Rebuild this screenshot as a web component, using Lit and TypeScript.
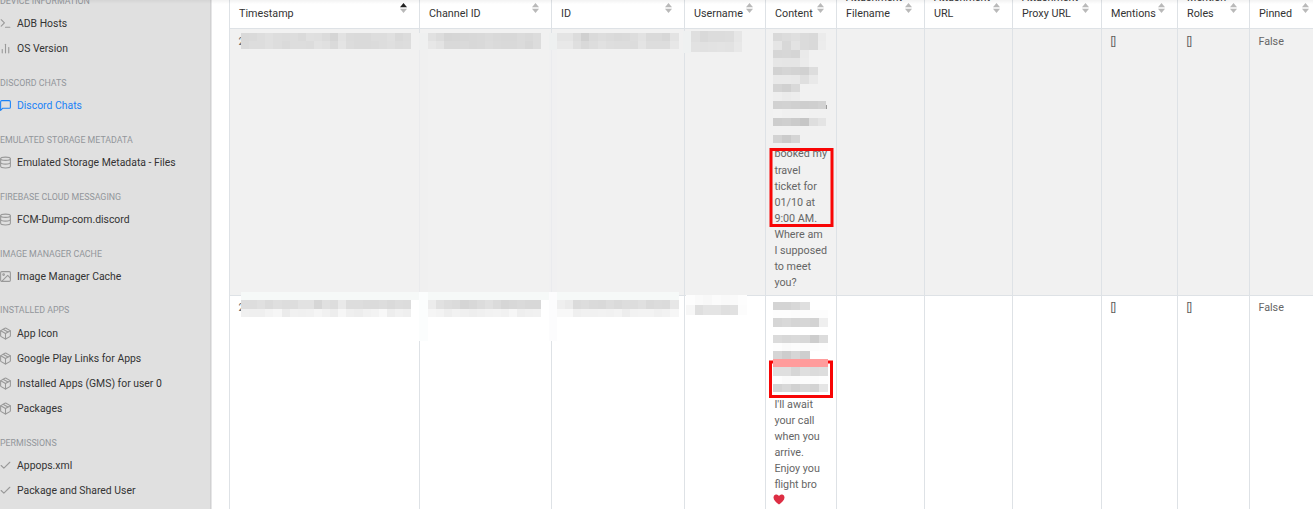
import { LitElement, html, css, svg } from "lit";
import { customElement, property } from "lit/decorators.js";

const ICONS: Record<string, unknown> = {
  terminal: svg`<polyline points="4 17 10 11 4 5"/><line x1="12" y1="19" x2="20" y2="19"/>`,
  bars: svg`<line x1="18" y1="20" x2="18" y2="10"/><line x1="12" y1="20" x2="12" y2="4"/><line x1="6" y1="20" x2="6" y2="14"/>`,
  message: svg`<path d="M21 15a2 2 0 0 1-2 2H7l-4 4V5a2 2 0 0 1 2-2h14a2 2 0 0 1 2 2z"/>`,
  database: svg`<ellipse cx="12" cy="5" rx="9" ry="3"/><path d="M21 12c0 1.66-4 3-9 3s-9-1.34-9-3"/><path d="M3 5v14c0 1.66 4 3 9 3s9-1.34 9-3V5"/>`,
  image: svg`<rect x="3" y="3" width="18" height="18" rx="2"/><circle cx="8.5" cy="8.5" r="1.5"/><polyline points="21 15 16 10 5 21"/>`,
  package: svg`<line x1="16.5" y1="9.4" x2="7.5" y2="4.21"/><path d="M21 16V8a2 2 0 0 0-1-1.73l-7-4a2 2 0 0 0-2 0l-7 4A2 2 0 0 0 3 8v8a2 2 0 0 0 1 1.73l7 4a2 2 0 0 0 2 0l7-4A2 2 0 0 0 21 16z"/><polyline points="3.27 6.96 12 12.01 20.73 6.96"/><line x1="12" y1="22.08" x2="12" y2="12"/>`,
  check: svg`<polyline points="20 6 9 17 4 12"/>`,
};

const GROUPS: { title: string; items: [string, string][] }[] = [
  { title: "Device Information", items: [["terminal", "ADB Hosts"], ["bars", "OS Version"]] },
  { title: "Discord Chats", items: [["message", "Discord Chats"]] },
  { title: "Emulated Storage Metadata", items: [["database", "Emulated Storage Metadata - Files"]] },
  { title: "Firebase Cloud Messaging", items: [["database", "FCM-Dump-com.discord"]] },
  { title: "Image Manager Cache", items: [["image", "Image Manager Cache"]] },
  {
    title: "Installed Apps",
    items: [
      ["package", "App Icon"],
      ["package", "Google Play Links for Apps"],
      ["package", "Installed Apps (GMS) for user 0"],
      ["package", "Packages"],
    ],
  },
  { title: "Permissions", items: [["check", "Appops.xml"], ["check", "Package and Shared User"]] },
];

const COLUMNS: string[][] = [
  ["Timestamp"], ["Channel ID"], ["ID"], ["Username"], ["Content"],
  ["Attachment", "Filename"], ["Attachment", "URL"], ["Attachment", "Proxy URL"],
  ["Mentions"], ["Mention", "Roles"], ["Pinned"],
];

interface Row { hidden: number; lines: string[]; heart: boolean }
const ROWS: Row[] = [
  { hidden: 7, heart: false, lines: ["booked my", "travel", "ticket for", "01/10 at", "9:00 AM.", "Where am", "I supposed", "to meet", "you?"] },
  { hidden: 6, heart: true, lines: ["I'll await", "your call", "when you", "arrive.", "Enjoy you", "flight bro"] },
];

/* Strips of pixelation: x, y, cell width, height, two hex digits of grey per cell. */
type Strip = [number, number, number, number, string];
const STRIPS: Strip[] = [
  [241, 33, 8.1, 8, "d9dadde0dddcdddae0dfdbd5e2dbdadadddde0d9dcdd"],
  [241, 41, 8.1, 8, "dadddde0dddadddddce2e0dae4dcdadadbdddfdcdd"],
  [428, 33, 8.1, 8, "e1dcd5d6d7d8d9dbd9d8d8dbd9dc"],
  [428, 41, 8.1, 8, "e7e3d9d9dad8d9dcdad9d9dbd7dc"],
  [557, 33, 8.1, 8, "e4e4dcd0dadddbd9dadde2dadad7e3"],
  [557, 41, 8.1, 8, "e8e8dfd9dde1dedddddce4dddddde7"],
  [691, 31, 8.5, 11, "dfd9dcdcdde6"],
  [691, 42, 8.5, 10, "e2e1e2e3e2e8"],
  [773, 33, 8.9, 8, "d9dcdfdbd9eb"],
  [773, 41, 8.9, 9, "e5d8e3dbd9ec"],
  [773, 50, 8.9, 8, "d6d7d5ea"],
  [773, 58, 8.9, 9, "e6e5e5eb"],
  [773, 67, 8.9, 8, "d2d5d3d1dd"],
  [773, 75, 8.9, 9, "e9e9e8dfe9"],
  [773, 84, 8.9, 8, "d4d0d9"],
  [773, 92, 8.9, 9, "eeebed"],
  [773, 101, 8.9, 8, "d1d2d0cecfd2"],
  [773, 109, 8.9, 9, "f2f0f0f2f1f1"],
  [773, 118, 8.9, 8, "cdcfcbc6dee4"],
  [773, 135, 8.9, 8, "d3cbd5"],
  [241, 300, 8.1, 9, "dddde0dbdfdddde2e2d6e0dde9dddddbdbdddadddc"],
  [241, 309, 8.1, 8, "f0efeff3f6ebf1f0f1f5f1edf6efedf1f3f8edf1ef"],
  [428, 300, 8.1, 9, "ece1dddbd5d8dce0dbd6d8dad8d8"],
  [428, 309, 8.1, 8, "f5f3eef2f0eef0f2f3f1f6eef0f1"],
  [557, 300, 8.1, 9, "efebdbdddad9dddadddde0dadcdbe7"],
  [557, 309, 8.1, 8, "f8f8eff1f1f2f1f3edf2f3f3f0f2f6"],
  [686, 295, 8.7, 10, "fdfaf8fbf9fafd"],
  [686, 305, 8.7, 10, "f7dfe4e4dfe1fc"],
  [773, 302, 9.15, 8, "d4d4d8df"],
  [773, 310, 9.15, 8, "fdfdfcfcfdfd"],
  [773, 318, 9.15, 9, "d6d9d5d6d3ef"],
  [773, 335, 9.15, 8, "dbd8dad8cddc"],
  [773, 343, 9.15, 8, "fdfafcfbfcfd"],
  [773, 351, 9.15, 8, "d5cdd6ce"],
  [773, 367, 9.15, 9, "dfdfd6dfdbdd"],
  [773, 376, 9.15, 8, "fdfafbfcfbfd"],
  [773, 384, 9.15, 8, "d3d8d1d7d3e5"],
];

function strip([x, y, w, h, greys]: Strip) {
  const cells = (greys.match(/../g) ?? []).slice(0, 21);
  return cells.map(
    (g, i) => svg`<rect x=${(x + i * w).toFixed(2)} y=${y} width=${w} height=${h} fill=${`#${g}${g}${g}`}></rect>`
  );
}

@customElement("nav-panel")
export class NavPanel extends LitElement {
  static styles = css`
    :host { display: block; box-sizing: border-box; width: 212px; height: 509px; overflow: hidden;
      background: linear-gradient(90deg, #e0e0e0 210px, #d1d1d2 210px 211px, #e6e6e7 211px); }
    .list { margin-top: -20.7px; }
    .title { box-sizing: border-box; height: 31.75px; padding-top: 15.5px; font-size: 8.83px; line-height: 12px;
      color: #92969b; text-transform: uppercase; white-space: nowrap; }
    .item { display: flex; align-items: center; gap: 5px; height: 25.15px; margin-left: -1px; font-size: 10.42px;
      font-weight: 400; color: #333; white-space: nowrap; }
    .item.active { color: #1a82f7; }
    .icon { width: 13px; height: 13px; fill: none; stroke: #999; stroke-width: 2; stroke-linecap: round; stroke-linejoin: round; }
    .active .icon { stroke: #1a82f7; }
  `;
  render() {
    return html`<nav class="list">
      ${GROUPS.map((g) => html`<div class="title">${g.title}</div>
        ${g.items.map(([icon, label]) => html`<div class="item ${label === "Discord Chats" ? "active" : ""}">
          <svg class="icon" viewBox="0 0 24 24">${ICONS[icon]}</svg><span>${label}</span></div>`)}`)}
    </nav>`;
  }
}

@customElement("sort-arrows")
export class SortArrows extends LitElement {
  @property({ type: Boolean, reflect: true }) ascending = false;
  static styles = css`
    :host { display: block; width: 7px; height: 10px; }
    .mark { display: block; }
    .tri { fill: #b9b9b9; }
    :host([ascending]) .up { fill: #222; }
  `;
  render() {
    return html`<svg class="mark" width="7" height="10" viewBox="0 0 7 10">
      <path class="tri up" d="M0 4.2 3.5 0 7 4.2z"/><path class="tri" d="M0 5.8h7L3.5 10z"/></svg>`;
  }
}

@customElement("chat-table")
export class ChatTable extends LitElement {
  static styles = css`
    :host { display: block; position: relative; width: 1092px; }
    .row { display: grid; grid-template-columns: 190px 132px 133px 81px 71px 88px 88px 89px 76px 72px 72px; }
    .head { height: 28px; align-items: stretch; }
    .cell { box-sizing: border-box; border-left: 1px solid #dee2e6; }
    .th { display: flex; justify-content: space-between; align-items: flex-end; padding: 0 12px 6.5px 9px;
      font-size: 10.78px; line-height: 15.6px; color: #333; white-space: nowrap; height: 28px; }
    .label { display: flex; flex-direction: column; }
    .arrows { margin-bottom: 8.5px; }
    .body { border-top: 1px solid #dee2e6; height: 266px; }
    .body.last { height: 215px; }
    .odd { background: #f1f1f1; }
    .td { padding: 4px 0 0 8.4px; font-size: 10.75px; line-height: 16.1px; color: #666; white-space: nowrap; }
    .odd .td { padding-top: 4.8px; }
    .line { height: 16.1px; }
    .heart { display: block; margin: 1px 0 0 -1px; }
    .overlay { position: absolute; left: -229px; top: 0; pointer-events: none; }
  `;
  private content(r: Row) {
    return html`${Array.from({ length: r.hidden }, () => html`<div class="line"></div>`)}
      ${r.lines.map((l) => html`<div class="line">${l}</div>`)}
      ${r.heart ? html`<svg class="heart" width="12" height="11" viewBox="0 0 12 11"><path fill="#dd2e44" d="M6 10.4C3.3 8.6.5 6.2.5 3.5A2.9 2.9 0 0 1 6 2.1a2.9 2.9 0 0 1 5.5 1.4c0 2.7-2.8 5.1-5.5 6.9z"/></svg>` : ""}`;
  }
  render() {
    return html`
      <div class="row head">
        ${COLUMNS.map((c, i) => html`<div class="cell th"><div class="label">${c.map((t) => html`<span>${t}</span>`)}</div>
          <sort-arrows class="arrows" ?ascending=${i === 0}></sort-arrows></div>`)}
      </div>
      ${ROWS.map((r, n) => html`<div class="row body ${n === 0 ? "odd" : "last"}">
        ${["2", "", "", "", this.content(r), "", "", "", "[]", "[]", "False"].map((v) => html`<div class="cell td">${v}</div>`)}
      </div>`)}
      <svg class="overlay" width="1313" height="509" viewBox="0 0 1313 509" shape-rendering="crispEdges">
        <rect x="419" y="33" width="9" height="17" fill="#eff0f0"/>
        <rect x="549" y="33" width="8" height="17" fill="#eef0f0"/>
        <rect x="683" y="31" width="8" height="22" fill="#eff1f1"/>
        <rect x="419" y="50" width="9" height="242" fill="#eff0f0" opacity=".7"/>
        <rect x="549" y="50" width="8" height="242" fill="#eff0f1" opacity=".7"/>
        <rect x="241" y="292" width="438" height="8" fill="#f6f9f8"/>
        <rect x="241" y="300" width="438" height="17" fill="#fff"/>
        <rect x="419" y="292" width="9" height="49" fill="#fbfdfd"/>
        <rect x="549" y="292" width="8" height="49" fill="#fcfcfd"/>
        ${STRIPS.map(strip)}
        <rect x="826" y="105" width="1" height="4" fill="#999"/>
        <rect x="771" y="149.5" width="61" height="76" fill="none" stroke="#f80505" stroke-width="3" shape-rendering="auto"/>
        <rect x="770.5" y="362" width="61" height="34.5" fill="none" stroke="#f80505" stroke-width="3" shape-rendering="auto"/>
        <rect x="773" y="359" width="55" height="8" fill="#ff9c9c"/>
      </svg>`;
  }
}

@customElement("app-root")
export class AppRoot extends LitElement {
  static styles = css`
    :host { display: flex; position: relative; width: 1313px; height: 509px; overflow: hidden; background: #fff;
      font-family: Roboto, "Liberation Sans", sans-serif; }
    .nav { flex: none; }
    .main { flex: 1; min-width: 0; padding-left: 17px; overflow: hidden; }
    .shade { position: absolute; left: 0; right: 0; top: 0; height: 4px; background: linear-gradient(rgba(0,0,0,.05), transparent); }
  `;
  render() {
    return html`<nav-panel class="nav"></nav-panel>
      <main class="main"><chat-table></chat-table></main><div class="shade"></div>`;
  }
}
